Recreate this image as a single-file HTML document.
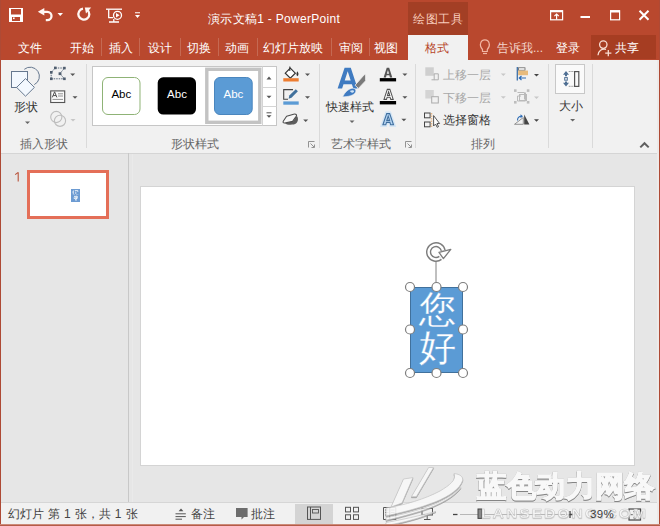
<!DOCTYPE html>
<html><head><meta charset="utf-8">
<style>
*{margin:0;padding:0;box-sizing:border-box}
html,body{width:660px;height:526px;overflow:hidden;background:#E6E6E6;font-family:"Liberation Sans",sans-serif;}
.a{position:absolute}
#title{left:0;top:0;width:660px;height:60px;background:#B9482E}
.tt{color:#fff;font-size:12px;line-height:14px;white-space:nowrap}
.tab{color:#fff;font-size:12px;line-height:14px;white-space:nowrap;top:41px}
.sep{width:1px;background:rgba(255,255,255,0.18);top:38px;height:18px}
#ribbon{left:0;top:60px;width:660px;height:94px;background:#F1F1F1;border-bottom:1px solid #D5D5D5}
.rt{color:#363636;font-size:12px;line-height:14px;white-space:nowrap}
.gl{color:#666;font-size:12px;line-height:14px;white-space:nowrap;top:137px}
.vs{width:1px;background:#DADADA;top:64px;height:84px}
.dd{width:0;height:0;border-left:3px solid transparent;border-right:3px solid transparent;border-top:3px solid #555}
#status{left:0;top:502px;width:660px;height:24px;background:#F1F1F1;border-top:1px solid #D6D6D6}
.st{color:#444;font-size:12px;line-height:14px;white-space:nowrap;top:507px}
</style></head><body>
<div id="title" class="a"></div>
<!-- context tab header -->
<div class="a" style="left:408px;top:2px;width:60px;height:33px;background:#A33F25"></div>
<div class="a tt" style="left:413px;top:12px;color:#F8CDBD;letter-spacing:0.6px">绘图工具</div>
<div class="a tt" style="left:208px;top:12px;letter-spacing:0.3px">演示文稿1 - PowerPoint</div>

<!-- tabs -->

<!-- QAT icons -->
<svg class="a" style="left:0;top:0;z-index:2" width="660" height="60" viewBox="0 0 660 60">
 <path fill="#fff" fill-rule="evenodd" d="M9 8h14v14H9z M11 9h10v5.5H11z M12 17h8v4h-8z"/>
 <rect x="13" y="17.5" width="1.6" height="1.6" fill="#fff"/>
 <g fill="none" stroke="#FFF6F2" stroke-width="2.3">
  <path d="M42 11.8H47.3A4.2 4.2 0 0 1 47.3 20.2H45.8"/>
  <path d="M83 8.7A5.5 5.5 0 1 0 87.2 9.8"/>
 </g>
 <path fill="#FFF6F2" d="M37.8 11.8L44.3 8V15.6z"/>
 <path fill="#fff" d="M57.5 13H63L60.25 16z"/>
 <path fill="#FFF6F2" d="M84.8 7.4H91.2L86 13.4z"/>
 <g fill="none" stroke="#fff" stroke-width="1.3">
  <path d="M106 9.2H122"/>
  <path d="M108.7 9.5V17.7H113"/>
  <circle cx="117.5" cy="15.3" r="4"/>
  <path d="M113.8 19V21.5M109 22H119"/>
 </g>
 <path fill="#fff" d="M116 13V17.6L119.6 15.3z"/>
 <path fill="#fff" d="M135 12.3H140V13.3H135z M135 15H140L137.5 18z"/>
 <!-- window controls -->
 <g fill="none" stroke="#fff" stroke-width="1.2">
  <rect x="550.6" y="10.8" width="12" height="9"/>
  <path d="M556.6 19.5V14.2M554.4 16.2L556.6 14L558.8 16.2"/>
  <rect x="610.6" y="10.8" width="9" height="9"/>
 </g>
 <path fill="#fff" d="M550 10.2h13v2h-13z M610 10.2h10v2.2h-10z M580.5 16h9.5v2h-9.5z"/>
 <path stroke="#fff" stroke-width="2" d="M639.5 10.7L648.5 19.7M648.5 10.7L639.5 19.7"/>
 <!-- bulb -->
 <g fill="none" stroke="#F2B6A4" stroke-width="1.2">
  <path d="M482.5 49.5C480 46.5 480.4 44 480.6 43.4A4.4 4.4 0 0 1 489.2 43.4C489.4 44 489.8 46.5 487.3 49.5V51.5H482.5z"/>
  <path d="M483 53.5H487"/>
 </g>
 <!-- share person -->
 <g fill="none" stroke="#F8DDD3" stroke-width="1.3">
  <circle cx="603.3" cy="44.6" r="3.7"/>
  <path d="M598 55.2A6.2 6.2 0 0 1 606 49.4"/>
  <path d="M608.3 50V56.2M605.2 53.1H611.4"/>
 </g>
</svg>
<div class="a tab" style="left:18px">文件</div>
<div class="a tab" style="left:70px">开始</div>
<div class="a sep" style="left:101px"></div>
<div class="a tab" style="left:109px">插入</div>
<div class="a sep" style="left:139px"></div>
<div class="a tab" style="left:148px">设计</div>
<div class="a sep" style="left:180px"></div>
<div class="a tab" style="left:187px">切换</div>
<div class="a sep" style="left:218px"></div>
<div class="a tab" style="left:225px">动画</div>
<div class="a sep" style="left:257px"></div>
<div class="a tab" style="left:263px">幻灯片放映</div>
<div class="a sep" style="left:331px"></div>
<div class="a tab" style="left:339px">审阅</div>
<div class="a sep" style="left:369px"></div>
<div class="a tab" style="left:374px">视图</div>
<div class="a" style="left:408px;top:35px;width:60px;height:26px;background:#F1F1F1"></div>
<div class="a tab" style="left:425px;color:#B7472A">格式</div>
<div class="a tab" style="left:497px;color:#F3D5CB">告诉我...</div>
<div class="a tab" style="left:556px">登录</div>
<div class="a" style="left:591px;top:35px;width:65px;height:24px;background:#A63D22"></div>
<div class="a tab" style="left:615px">共享</div>

<div id="ribbon" class="a"></div>
<div class="a rt" style="left:14px;top:100px">形状</div>
<div class="a gl" style="left:20px">插入形状</div>
<div class="a vs" style="left:86px"></div>
<div class="a gl" style="left:171px">形状样式</div>
<div class="a vs" style="left:319px"></div>
<div class="a rt" style="left:326px;top:100px">快速样式</div>
<div class="a gl" style="left:331px">艺术字样式</div>
<div class="a vs" style="left:415px"></div>
<div class="a rt" style="left:443px;top:113px">选择窗格</div>
<div class="a rt" style="left:443px;top:68px;color:#A8A8A8">上移一层</div>
<div class="a rt" style="left:443px;top:91px;color:#A8A8A8">下移一层</div>
<div class="a gl" style="left:471px">排列</div>
<div class="a vs" style="left:548px"></div>
<div class="a rt" style="left:559px;top:99px">大小</div>
<div class="a vs" style="left:592px"></div>


<!-- ribbon icons -->
<svg class="a" style="left:0;top:0;z-index:2" width="660" height="160" viewBox="0 0 660 160">
 <defs>
  <path id="dd" d="M0 0H5L2.5 2.5z"/>
 </defs>
 <!-- shapes -->
 <g fill="#F3F8FE" stroke="#66788F" stroke-width="1">
  <path fill="none" d="M24.3 69.3A9.2 9.2 0 1 1 34.3 84.6"/>
  <rect x="11.5" y="71.5" width="16" height="16"/>
  <path d="M25.5 78.6L34.4 87.4L25.5 96.2L16.6 87.4z"/>
 </g>
 <use href="#dd" x="25" y="121.5" fill="#666"/>
 <!-- edit shape -->
 <g stroke="#5A6A7E" stroke-width="1" stroke-dasharray="1.5 1" fill="none">
  <path d="M55.3 68H64.4M51.2 72.3L55.3 68M59.9 73.6L64.4 68.2M51.2 72.3V78.8M51.2 78.8H64.4M59.9 73.6L64.4 78.8"/>
 </g>
 <g fill="#4F5D6E">
  <rect x="54" y="66.6" width="2.6" height="2.6"/><rect x="63.1" y="66.8" width="2.6" height="2.6"/>
  <rect x="50" y="71" width="2.6" height="2.6"/><rect x="58.6" y="72.3" width="2.8" height="2.8"/>
  <rect x="50" y="77.5" width="2.6" height="2.6"/><rect x="63.1" y="77.5" width="2.6" height="2.6"/>
 </g>
 <use href="#dd" x="70.2" y="73.6" fill="#555"/>
 <!-- text box -->
 <rect x="50.7" y="90.9" width="14" height="11.6" fill="#FAFAFA" stroke="#555" stroke-width="1.1"/>
 <path d="M52.3 97.4L54.6 91.8L56.9 97.4M53.2 95.6H56" fill="none" stroke="#505050" stroke-width="1"/>
 <path d="M58 93.8H63M58 96H63M52.5 99.4H63" stroke="#777" stroke-width="0.8"/>
 <use href="#dd" x="72.5" y="96.3" fill="#555"/>
 <!-- merge shapes -->
 <g fill="none" stroke="#BDBDBD" stroke-width="1.1">
  <circle cx="56.3" cy="117" r="5.6"/><circle cx="60" cy="120.8" r="5.6"/>
 </g>
 <use href="#dd" x="70.5" y="119" fill="#C6C6C6"/>

 <!-- gallery -->
 <rect x="92.5" y="66.5" width="184" height="59" fill="#fff" stroke="#C6C6C6"/>
 <path d="M262.5 66.5V125.5M262.5 87.5H276.5M262.5 106.5H276.5" stroke="#D4D4D4" fill="none"/>
 <path d="M266.5 79.5H271.5L269 76.5z" fill="#555"/>
 <use href="#dd" x="266.5" y="95.8" fill="#555"/>
 <path d="M266.5 112.8H271.5" stroke="#555" stroke-width="1"/>
 <use href="#dd" x="266.5" y="115.3" fill="#555"/>
 <rect x="102.5" y="77.5" width="37.5" height="37" rx="5.5" fill="#fff" stroke="#8FB376" stroke-width="1"/>
 <rect x="157.7" y="77.3" width="38.3" height="37.3" rx="5.5" fill="#000"/>
 <rect x="206.8" y="69.3" width="53" height="53" fill="#fff" stroke="#C3C3C3" stroke-width="3.4"/>
 <rect x="214.5" y="77.5" width="37.7" height="37" rx="5.5" fill="#5B9BD5" stroke="#4A86BE" stroke-width="1"/>
 <g font-family="Liberation Sans" font-size="11.5" text-anchor="middle">
  <text x="121.3" y="98.3" fill="#000">Abc</text>
  <text x="177" y="98.3" fill="#fff">Abc</text>
  <text x="233.4" y="98.3" fill="#fff">Abc</text>
 </g>
 <!-- fill / outline / effects -->
 <path d="M290.3 68.2L295.3 73.2L290.3 78.2L285.3 73.2z" fill="#fff" stroke="#333" stroke-width="1.2"/>
 <path d="M289.8 66.5V71" stroke="#333" stroke-width="1"/>
 <path d="M297.3 71.3C298.8 73.2 299 75 297.3 76.3C296 75.3 296.3 73.3 297.3 71.3z" fill="#333"/>
 <rect x="283.3" y="78.2" width="15.4" height="3.3" fill="#ED7D31"/>
 <use href="#dd" x="305" y="73.6" fill="#555"/>
 <path d="M293 89.6H283.7V99.3H288" fill="none" stroke="#444" stroke-width="1.1"/>
 <path d="M288.6 98.8L289.3 95.6L295.8 89.2L297.9 91.3L291.5 97.8z" fill="#41719C"/>
 <rect x="283.3" y="101.4" width="15.4" height="3.3" fill="#5B9BD5"/>
 <use href="#dd" x="305" y="96.3" fill="#555"/>
 <path d="M293 121.5L296.8 115.8C298.6 118 298.4 121.6 296 123.6C294.6 124.8 291 125 287 124.6L284 122.6z" fill="#5E5E5E"/>
 <path d="M286.6 116.3L293.6 114.2C296 113.6 297.2 114.8 296.2 116.4L292.6 121.4L284.8 123C283.2 123.2 282.6 122.2 283.4 121z" fill="#F7F7F7" stroke="#4E4E4E" stroke-width="1.1" stroke-linejoin="round"/>
 <use href="#dd" x="303.2" y="119.6" fill="#555"/>
 <!-- launchers -->
 <g fill="none" stroke="#888" stroke-width="0.9">
  <path d="M308.5 147.5V141.5H314.5M310.5 143.5L314 147M314.5 144.5V147.5H311.5"/>
  <path d="M405.5 147.5V141.5H411.5M407.5 143.5L411 147M411.5 144.5V147.5H408.5"/>
 </g>

 <!-- quick styles -->
 <defs><path id="glA" fill-rule="evenodd" d="M0 10L3.6 0H6.4L10 10H7.3L6.6 7.8H3.4L2.7 10Z M3.7 6.1H6.3L5 2.3Z"/></defs>
 <path fill="#3F7BC1" fill-rule="evenodd" d="M337.6 88.6L344.6 67.8H350.8L357.6 88.6H353.3L351.9 84.3H343.5L342.1 88.6Z M344.7 80.4H350.7L347.7 71.2Z"/>
 <path d="M355 85.2L364.2 74.8L365.6 74.4L365.6 80.8L358.4 88.4z" fill="#7A7A7A" stroke="#F1F1F1" stroke-width="0.8"/>
 <path d="M342.6 96.8C344.8 92.2 349.2 88.2 352.8 88.2C355.6 88.4 356.6 90.6 355.2 92.8C353.4 95.4 348.6 96.8 342.6 96.8z" fill="#3F7BC1" stroke="#F1F1F1" stroke-width="0.6"/>
 <path d="M349.8 91C351.8 89.8 354 89.8 354 91.6C353.6 93 351.6 93.4 349.8 91z" fill="#CFE3F6"/>
 <use href="#dd" x="349.5" y="120.6" fill="#666"/>
 <!-- text fill A -->
 <use href="#glA" transform="translate(383.6 67.8) scale(0.87 0.97)" fill="#555"/>
 <rect x="379.8" y="78.1" width="16.3" height="3.3" fill="#000"/>
 <use href="#dd" x="402.4" y="73.6" fill="#555"/>
 <use href="#glA" transform="translate(384 89.4) scale(0.92 1.0)" fill="#fff" stroke="#505050" stroke-width="1.1" vector-effect="non-scaling-stroke"/>
 <rect x="379.8" y="101" width="16.3" height="3.4" fill="#000"/>
 <use href="#dd" x="402.4" y="96.2" fill="#555"/>
 <use href="#glA" transform="translate(382.4 113.2) scale(1.15 1.2)" fill="#E3EEF8" stroke="#D5E6F5" stroke-width="3" vector-effect="non-scaling-stroke"/>
 <use href="#glA" transform="translate(382.9 113.6) scale(1.06 1.12)" fill="#B5D3EF" stroke="#3E6E9E" stroke-width="1" vector-effect="non-scaling-stroke"/>
 <use href="#dd" x="401.4" y="118.8" fill="#555"/>

 <!-- arrange -->
 <rect x="425.3" y="67.3" width="8.5" height="8.5" fill="#CFCFCF"/>
 <path d="M434.2 74V79.8H431.5M438.3 73.8V79.8H434" fill="none" stroke="#AFAFAF" stroke-width="1"/>
 <path d="M433.8 73.8H438.3" stroke="#AFAFAF"/>
 <use href="#dd" x="500.8" y="73.6" fill="#C8C8C8"/>
 <rect x="425.3" y="90" width="8.5" height="8.5" fill="#D4D4D4"/>
 <rect x="431.7" y="96.7" width="6.6" height="6.3" fill="#F1F1F1" stroke="#ABABAB" stroke-width="1"/>
 <use href="#dd" x="500.8" y="96.3" fill="#C8C8C8"/>
 <rect x="424.5" y="113" width="5.6" height="4.8" fill="none" stroke="#444" stroke-width="1"/>
 <rect x="424.5" y="122" width="5.6" height="4.8" fill="none" stroke="#444" stroke-width="1"/>
 <path d="M431.5 113V127" stroke="#E6B98A" stroke-width="1.5" stroke-dasharray="1.5 1"/>
 <path d="M433.6 115.6V126L435.6 124L437.2 127.3L438.5 126.6L437 123.5H439.6z" fill="#fff" stroke="#444" stroke-width="0.9"/>
 <!-- align -->
 <path d="M517.3 67V80.5" stroke="#3C6FA8" stroke-width="1.3"/>
 <rect x="518.5" y="67.8" width="6.5" height="2.4" fill="#fff" stroke="#666" stroke-width="0.8"/>
 <rect x="518.2" y="70.6" width="9.8" height="4.6" fill="#E8BB7C"/>
 <path d="M526 78H519.5M521.5 76L519.3 78L521.5 80" fill="none" stroke="#2F6DB5" stroke-width="1.2"/>
 <use href="#dd" x="534" y="74" fill="#444"/>
 <!-- group (gray) -->
 <g fill="none" stroke="#BABABA" stroke-width="1">
  <path d="M517.5 92.5H524.5V99.5M521 96H517.5V101H525.5V92.5" />
  <rect x="519.5" y="94.5" width="7" height="6"/>
 </g>
 <g fill="#BDBDBD">
  <rect x="514" y="89.3" width="2.6" height="2.6"/><rect x="526.8" y="89.3" width="2.6" height="2.6"/>
  <rect x="514" y="101" width="2.6" height="2.6"/><rect x="526.8" y="101" width="2.6" height="2.6"/>
 </g>
 <use href="#dd" x="534" y="96.5" fill="#C8C8C8"/>
 <!-- rotate -->
 <path d="M514.5 124.3L523.3 117.5V124.3z" fill="none" stroke="#888" stroke-width="0.9"/>
 <path d="M524.2 114.5L529.4 124.6H524.2z" fill="#444"/>
 <path d="M517.5 120.5C517.5 118 519 116.2 521.5 116.2" fill="none" stroke="#2F6DB5" stroke-width="1.1"/>
 <path d="M520.5 114.2L523 116.2L520.5 118.2z" fill="#2F6DB5"/>
 <use href="#dd" x="534" y="119.3" fill="#444"/>
 <!-- size -->
 <rect x="555.5" y="64.5" width="29" height="29" fill="#FAFAFA" stroke="#C8C8C8"/>
 <g fill="#4F6F93">
  <path d="M566 71L569 74.8H567V76.2H565V74.8H563z"/>
  <path d="M566 86.6L569 82.8H567V81.4H565V82.8H563z"/>
 </g>
 <rect x="564.7" y="77.6" width="2.6" height="2.6" fill="none" stroke="#4F6F93" stroke-width="1"/>
 <path d="M568.8 71.5H573.5M568.8 86.3H573.5" stroke="#666" stroke-width="0.9" stroke-dasharray="0.9 0.9"/>
 <rect x="574.6" y="71.6" width="4.2" height="14.8" fill="none" stroke="#555" stroke-width="1.2"/>
 <use href="#dd" x="570.1" y="119" fill="#666"/>
 <!-- collapse -->
 <path d="M640.3 147.4L644.5 143.2L648.7 147.4" fill="none" stroke="#5F5F5F" stroke-width="2"/>
</svg>
<!-- thumbnail pane -->
<div class="a" style="left:128px;top:153px;width:1px;height:349px;background:#C8C8C8"></div>
<div class="a" style="left:132px;top:154px;width:1px;height:348px;background:#EAEAEA"></div>
<svg class="a" style="left:0;top:160px" width="30" height="30" viewBox="0 160 30 30"><path d="M18.2 172.2V181.6M18.2 172.4L15.2 174.6" stroke="#B9533B" stroke-width="1.1" fill="none"/></svg>
<div class="a" style="left:27px;top:170px;width:82px;height:49px;border:3px solid #E46F58;background:#fff"></div>
<div class="a" style="left:71px;top:189px;width:9px;height:13px;background:#6C9BD2"></div>
<svg class="a" style="left:71px;top:189px" width="9" height="13" viewBox="0 0 9 13"><path d="M2.5 1.5L1.8 3.5M2.3 2.5V5.5M3.8 1.5H6.8V3M4.8 2.5V5M3.5 5.8L4.2 6.2M5 5.6L5.8 6.2M6.8 5.5L7.3 6M3 7.5H6.5L5 10.5L3 9M2.5 9H7M5 8V12" stroke="#fff" stroke-width="0.8" fill="none" opacity="0.9"/></svg>

<!-- slide -->
<div class="a" style="left:140px;top:186px;width:495px;height:280px;background:#fff;border:1px solid #D4D4D4"></div>
<div class="a" style="left:410px;top:287px;width:53px;height:86px;background:#5B9BD5;border:1px solid #41719C"></div>
<div class="a" style="left:417px;top:291px;width:40px;color:#fff;font-size:37px;line-height:38px;text-align:center;-webkit-text-stroke:0.3px #5B9BD5">您好</div>
<svg class="a" style="left:0;top:0;z-index:3" width="660" height="526" viewBox="0 0 660 526">
 <path d="M436 261.5V282" stroke="#808080" stroke-width="1"/>
 <path d="M440.4 257.9A7.35 7.35 0 1 1 443.2 250.6" fill="none" stroke="#7C7C7C" stroke-width="5.2"/>
 <path d="M440.4 257.9A7.35 7.35 0 1 1 443.2 250.6" fill="none" stroke="#fff" stroke-width="2.4"/>
 <path d="M439 252.4L450.8 249.4L443.4 258.6z" fill="#fff" stroke="#7C7C7C" stroke-width="1.3" stroke-linejoin="round"/>
 <g fill="#fff" stroke="#7E7E7E" stroke-width="1.2">
  <circle cx="410" cy="287" r="4.5"/><circle cx="436.5" cy="287" r="4.5"/><circle cx="463" cy="287" r="4.5"/>
  <circle cx="410" cy="329.5" r="4.5"/><circle cx="463" cy="329.5" r="4.5"/>
  <circle cx="410" cy="373" r="4.5"/><circle cx="436.5" cy="373" r="4.5"/><circle cx="463" cy="373" r="4.5"/>
 </g>
</svg>

<div id="status" class="a"></div>
<div class="a st" style="left:8px;word-spacing:0.7px">幻灯片 第 1 张，共 1 张</div>
<div class="a st" style="left:191px">备注</div>
<div class="a st" style="left:251px">批注</div>
<div class="a" style="left:295px;top:504px;width:38px;height:20px;background:#D4D4D4"></div>
<div class="a st" style="left:590px;font-size:11.5px;top:507px;z-index:5;letter-spacing:0.4px;color:#3A3A3A">39%</div>
<svg class="a" style="left:0;top:0;z-index:3" width="660" height="526" viewBox="0 0 660 526">
 <!-- notes -->
 <path d="M178.6 511.2L181 508.6L183.4 511.2z" fill="#555"/>
 <path d="M175.5 513.8H185.8M175.5 516.6H185.8M175.5 519.2H182" stroke="#555" stroke-width="1"/>
 <!-- comments -->
 <path d="M236 508H247.6V517H244L241.5 519.6V517H236z" fill="#6D6D6D"/>
 <!-- normal view -->
 <rect x="307.5" y="507" width="13" height="12.4" fill="none" stroke="#555" stroke-width="1"/>
 <path d="M310.5 507V519.4" stroke="#555"/>
 <rect x="312.5" y="509.5" width="6" height="3.5" fill="none" stroke="#555" stroke-width="0.9"/>
 <!-- sorter -->
 <g fill="none" stroke="#555" stroke-width="1">
  <rect x="345.5" y="507.3" width="5" height="4.6"/><rect x="353.5" y="507.3" width="5" height="4.6"/>
  <rect x="345.5" y="514.8" width="5" height="4.6"/><rect x="353.5" y="514.8" width="5" height="4.6"/>
 </g>
 <!-- reading -->
 <g fill="none" stroke="#555" stroke-width="1">
  <path d="M383.5 507.5H389.7V519.5H383.5z M389.7 507.5H395.8V519.5H389.7z"/>
  <path d="M385 510H388.5M385 512.5H388.5M385 515H388.5M391 510H394.5M391 512.5H394.5M391 515H394.5" stroke-width="0.8"/>
 </g>
 <!-- slideshow -->
 <g fill="none" stroke="#555" stroke-width="1">
  <rect x="422" y="508.5" width="10.5" height="6.5"/>
  <path d="M427.2 515V519.5M424 519.5H430.5"/>
 </g>
 <!-- zoom slider -->
 <path d="M453 514.5H457.5" stroke="#444" stroke-width="1.3"/>
 <path d="M460 514.5H565" stroke="#A8A8A8" stroke-width="0.8"/>
 <rect x="478" y="509" width="3.6" height="9.4" fill="#8A8A8A" stroke="#444" stroke-width="1"/>
 <path d="M566.5 514.5H573.5M570 511V518" stroke="#444" stroke-width="1.3"/>
 <!-- fit -->
 <rect x="629" y="509" width="11.5" height="11" fill="none" stroke="#444" stroke-width="1.2"/>
 <path d="M634.7 510.5V513.5M633.3 511.8L634.7 510.5L636.1 511.8M634.7 519V516M633.3 517.7L634.7 519L636.1 517.7M630.5 514.7H632.8M636.6 514.7H639" stroke="#555" stroke-width="0.9" fill="none"/>
</svg>

<!-- watermark -->
<div class="a" style="left:477px;top:470px;z-index:4;font-size:28.5px;line-height:32px;font-weight:900;color:#F7F7F7;letter-spacing:0.5px;white-space:nowrap;-webkit-text-stroke:1.6px #F8F8F8;filter:drop-shadow(0.7px 1.3px 0.3px #858585) drop-shadow(0 0 0.5px #A8A8A8)">蓝色动力网络</div>
<div class="a" style="left:481px;top:506px;z-index:4;font-size:12px;line-height:16px;font-weight:bold;color:#F6F6F6;letter-spacing:1.5px;white-space:nowrap;-webkit-text-stroke:0.4px #BDBDBD;text-shadow:0 1px 1px #B8B8B8;opacity:0.85;transform:scaleX(1.31);transform-origin:0 0">LANSEDONG.COM</div>
<svg class="a" style="left:0;top:0;z-index:4" width="660" height="526" viewBox="0 0 660 526">
 <g fill="#F9F9F9" stroke="#BDBDBD" stroke-width="0.7" stroke-linejoin="round" style="filter:drop-shadow(0.8px 1px 0.5px #959595);opacity:0.88">
  <path d="M403.5 479L413 477.6L402 503L391 507z"/>
  <path d="M428.6 467.5H433.6L416.4 496.7H411.4z"/>
  <path d="M454 473.6C460 474 463.6 477 462.6 480.5C460 488.5 450 496 435 502C420 508 402 512.5 386 516V508C405 505 425 499 440 491C450 485 456.5 480 454 473.6z"/>
  <path d="M461 487.5C455 496 441 504.5 421 511C408 515 396 518 386 520.5V517.5C401 515 420 510 435 504C448 498 456 492.5 461 487.5z"/>
  <path d="M436 511.5C421 518 402 523 386 525.5V522.5C401 520 420 515.5 436 511.5z"/>
 </g>
</svg>
<!-- window border -->
<div class="a" style="left:0;top:0;width:1px;height:526px;background:#AE4A35;z-index:5"></div>
<div class="a" style="left:657px;top:60px;width:2px;height:465px;background:#EEEAE9;z-index:5"></div>
<div class="a" style="left:659px;top:0;width:1px;height:526px;background:#AE4A35;z-index:5"></div>
<div class="a" style="left:0;top:524px;width:660px;height:2px;background:linear-gradient(180deg,#D9A293,#A8432F);z-index:5"></div>
</body></html>
